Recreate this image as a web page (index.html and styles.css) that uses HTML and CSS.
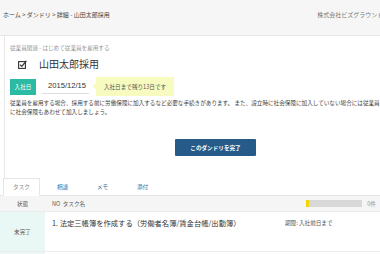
FILE: index.html
```html
<!DOCTYPE html>
<html lang="ja">

<head>
    <meta charset="UTF-8">
    <meta name="viewport" content="width=device-width, initial-scale=1.0">
    <title>詳細 - 山田太郎採用</title>
    <link rel="stylesheet" href="styles.css">
</head>

<body>
    <div class="page">
        <div class="topbar">
            <div class="breadcrumb">ホーム &gt; ダンドリ &gt; 詳細 - 山田太郎採用</div>
            <div class="company">株式会社ビズグラウンド (山田 太郎)</div>
        </div>

        <div class="panel">
            <div class="category">従業員関連 - はじめて従業員を雇用する</div>
            <h1 class="title">
                <svg class="check-icon" width="9" height="9" viewBox="0 0 9 9">
                    <rect x="0.6" y="1.6" width="6.8" height="6.8" fill="none" stroke="#333" stroke-width="1.1"/>
                    <path d="M2 4.6 L3.8 6.4 L8.4 0.8" fill="none" stroke="#333" stroke-width="1.3"/>
                </svg>
                山田太郎採用
            </h1>
            <div class="date-row">
                <span class="badge">入社日</span>
                <span class="date">2015/12/15</span>
                <span class="bubble">入社日まで残り13日です</span>
            </div>
            <p class="desc">従業員を雇用する場合、採用する前に労働保険に加入するなど必要な手続きがあります。 また、設立時に社会保険に加入していない場合には従業員を雇用する際<br>に社会保険もあわせて加入しましょう。</p>
            <div class="actions">
                <button class="btn-done">このダンドリを完了</button>
            </div>
        </div>

        <div class="tasks">
            <div class="tabs">
                <span class="tab active">タスク</span>
                <span class="tab">相談</span>
                <span class="tab">メモ</span>
                <span class="tab">添付</span>
            </div>
            <table class="task-table">
                <tr class="head">
                    <th class="col-status">状態</th>
                    <th class="col-name">NO&nbsp; タスク名</th>
                    <th class="col-due">
                        <span class="progress"><span class="progress-fill" style="width: 3px"></span></span>
                        <span class="count">0件</span>
                    </th>
                </tr>
                <tr>
                    <td class="col-status status-open">未完了</td>
                    <td class="col-name task-name">1. 法定三帳簿を作成する（労働者名簿/賃金台帳/出勤簿）</td>
                    <td class="col-due due">期限: 入社前日まで</td>
                </tr>
                <tr>
                    <td class="col-status status-open">未完了</td>
                    <td class="col-name task-name">2. 勤怠管理を実施する</td>
                    <td class="col-due due">期限: 入社前日まで</td>
                </tr>
            </table>
        </div>
    </div>
</body>

</html>
```

FILE: styles.css
```css
body {
    margin: 0;
    padding: 0;
    background-color: white;
    font-family: "Noto Sans CJK JP", "Liberation Sans", sans-serif;
    color: #333;
    overflow: hidden;
}

.page {
    width: 426px;
}

.topbar {
    display: flex;
    justify-content: space-between;
    align-items: flex-start;
    height: 36px;
    padding: 11px 12px 0 3px;
    box-sizing: border-box;
    background-color: #f6f6f6;
    border-bottom: 1px solid #e6e6e6;
    font-size: 6px;
    line-height: 8px;
}

.breadcrumb {
    color: #444;
}

.company {
    color: #777;
    white-space: nowrap;
}

.panel {
    margin-left: 4px;
    padding: 8px 5px 22px;
    border-left: 1px solid #e8e8e8;
}

.category {
    font-size: 5.6px;
    line-height: 8px;
    color: #999;
}

.title {
    display: flex;
    align-items: center;
    margin: 5px 0 0 8px;
    font-size: 10px;
    line-height: 14px;
    font-weight: normal;
    color: #333;
}

.check-icon {
    margin-right: 12px;
}

.date-row {
    display: flex;
    align-items: center;
    margin-top: 6px;
    height: 19px;
}

.badge {
    display: flex;
    align-items: center;
    justify-content: center;
    width: 26px;
    height: 16px;
    background-color: #2bbaa4;
    color: white;
    font-size: 5.6px;
}

.date {
    display: block;
    margin-left: 6px;
    width: 47px;
    padding: 0 0 2px 6px;
    box-sizing: border-box;
    border-bottom: 1px solid #ddd;
    font-family: "Liberation Sans", sans-serif;
    font-size: 7.6px;
    line-height: 11px;
    color: #333;
}

.bubble {
    position: relative;
    display: flex;
    align-items: center;
    justify-content: center;
    margin-left: 7px;
    width: 78px;
    height: 19px;
    background-color: #f7fbc0;
    font-size: 5.6px;
    color: #555;
}

.bubble::before {
    content: "";
    position: absolute;
    left: -4px;
    top: 6px;
    border-top: 3.5px solid transparent;
    border-bottom: 3.5px solid transparent;
    border-right: 4px solid #f7fbc0;
}

.desc {
    margin: 3px 0 0;
    font-size: 5.6px;
    line-height: 9px;
    color: #444;
    white-space: nowrap;
}

.actions {
    display: flex;
    justify-content: center;
    margin-top: 22px;
}

.btn-done {
    width: 81px;
    height: 17px;
    padding: 0;
    border: none;
    border-radius: 1px;
    background-color: #265a88;
    color: white;
    font-family: inherit;
    font-size: 5.6px;
    font-weight: bold;
}

.tabs {
    display: flex;
    padding-left: 3px;
    height: 18px;
    border-bottom: 1px solid #e6e6e6;
    box-sizing: border-box;
}

.tab {
    display: flex;
    align-items: center;
    justify-content: center;
    width: 35px;
    margin-right: 5px;
    font-size: 5.6px;
    color: #2e6da4;
}

.tab.active {
    background-color: white;
    border: 1px solid #e6e6e6;
    border-bottom-color: white;
    margin-bottom: -1px;
    color: #888;
}

.task-table {
    width: 100%;
    border-collapse: collapse;
}

.task-table th,
.task-table td {
    padding: 0;
    border-bottom: 1px solid #ececec;
}

.task-table .head th {
    height: 15px;
    background-color: #f5f5f5;
    font-size: 5.6px;
    font-weight: normal;
    color: #555;
    text-align: left;
}

.task-table .head .col-status {
    text-align: center;
}

.col-status {
    width: 45px;
}

.col-name {
    padding-left: 7px !important;
}

.col-due {
    width: 141px;
}

.progress {
    display: inline-block;
    vertical-align: middle;
    position: relative;
    width: 56px;
    height: 7px;
    margin-left: 21px;
    background-color: #d8d8d8;
}

.progress-fill {
    position: absolute;
    left: 0;
    top: 0;
    bottom: 0;
    background-color: #f2d600;
}

.count {
    vertical-align: middle;
    margin-left: 4px;
    color: #999;
}

.task-table td {
    height: 32px;
    vertical-align: top;
}

.status-open {
    background-color: #eaf8f5;
    text-align: center;
    vertical-align: middle !important;
    font-size: 5.6px;
    color: #555;
}

.task-name {
    padding-top: 6px !important;
    font-size: 7.3px;
    color: #333;
}

.due {
    padding-top: 7px !important;
    font-size: 5.6px;
    color: #555;
}
```
